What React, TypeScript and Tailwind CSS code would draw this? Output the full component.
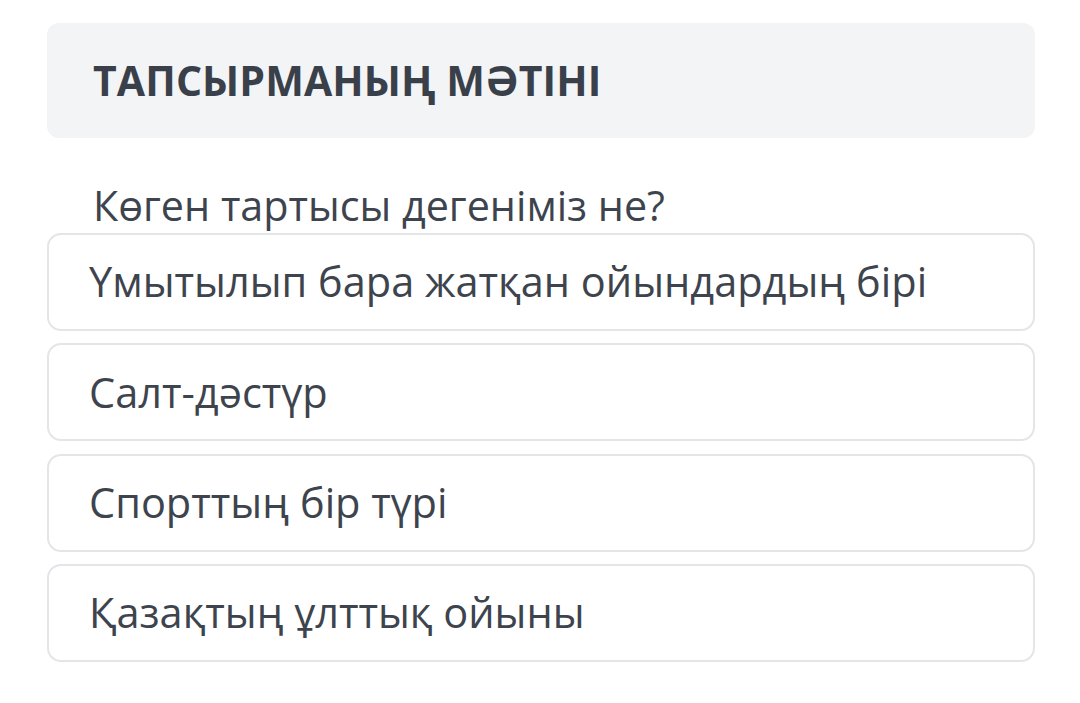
export default function App() {
  const options = [
    "Үмытылып бара жатқан ойындардың бірі",
    "Салт-дәстүр",
    "Спорттың бір түрі",
    "Қазақтың ұлттық ойыны",
  ];
  return (
    <div className="w-[1080px] h-[703px] bg-white font-['Open_Sans',sans-serif] pl-[47px] pr-[45px] pt-[23px]">
      <div className="h-[115px] rounded-[12px] bg-[#f3f4f6] flex items-center pl-[46px]">
        <h1 className="text-[41px] font-bold text-[#3a404a] leading-none tracking-[0.1px]">
          ТАПСЫРМАНЫҢ МӘТІНІ
        </h1>
      </div>
      <p className="mt-[40px] pl-[46px] text-[41.3px] leading-[55px] text-[#3e444d]">
        Көген тартысы дегеніміз не?
      </p>
      <div className="flex flex-col gap-[12.3px]">
        {options.map((o) => (
          <div
            key={o}
            className="h-[98px] rounded-[14px] border-2 border-[#e4e5e8] flex items-center pl-[40px]"
          >
            <span className="text-[41.5px] text-[#3e444d] leading-none">{o}</span>
          </div>
        ))}
      </div>
    </div>
  );
}
